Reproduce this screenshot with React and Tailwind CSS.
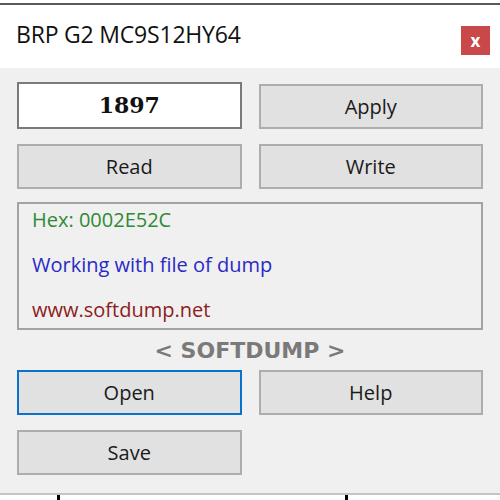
const btn =
  'h-[45px] bg-[#e1e1e1] border-2 border-[#adadad] text-[20px] text-[#1a1a1a] flex items-center justify-center';

export default function App() {
  return (
    <div
      className="w-[500px] h-[500px] flex flex-col bg-white overflow-hidden"
      style={{ fontFamily: '"Open Sans", "Noto Sans", sans-serif' }}
    >
      {/* window frame + title bar */}
      <div className="mt-[3px] border-t-2 border-[#595959] h-[65px] bg-white flex items-start justify-between pl-[16px] pr-[10px]">
        <span className="mt-[18px] text-[23px] text-[#111] leading-none tracking-[-0.2px]">
          BRP G2 MC9S12HY64
        </span>
        <button className="mt-[21px] w-[29px] h-[29px] bg-[#c94849] text-white text-[17px] font-bold flex items-center justify-center leading-none">
          x
        </button>
      </div>

      <div className="flex-1 bg-[#f0f0f0] px-[17px] flex flex-col">
        <div className="mt-[14px] grid grid-cols-2 gap-x-[17px] items-end">
          <div className="h-[47px] bg-white border-2 border-[#7a7a7a] flex items-center justify-center">
            <span
              className="text-[22px] font-bold text-[#111] -mt-[1px]"
              style={{ fontFamily: '"DejaVu Serif", serif' }}
            >
              1897
            </span>
          </div>
          <button className={btn}>Apply</button>
        </div>

        <div className="mt-[15px] grid grid-cols-2 gap-x-[17px]">
          <button className={btn}>Read</button>
          <button className={btn}>Write</button>
        </div>

        <div className="mt-[13px] h-[128px] border-2 border-[#a3a3a3] pl-[13px] flex flex-col gap-[13px] text-[20px] leading-[32px]">
          <div className="text-[#2f8a35]">Hex: 0002E52C</div>
          <div className="text-[#2a2ac4]">Working with file of dump</div>
          <div className="text-[#8e1c1c]">www.softdump.net</div>
        </div>

        <div
          className="h-[40px] flex items-center justify-center text-[22px] font-bold text-[#7a7a7a]"
          style={{ fontFamily: '"DejaVu Sans", sans-serif' }}
        >
          &lt; SOFTDUMP &gt;
        </div>

        <div className="grid grid-cols-2 gap-x-[17px]">
          <button className="h-[45px] bg-[#e1e1e1] border-2 border-[#0a72cc] text-[20px] text-[#1a1a1a] flex items-center justify-center">
            Open
          </button>
          <button className={btn}>Help</button>
        </div>

        <div className="mt-[15px] grid grid-cols-2 gap-x-[17px]">
          <button className={btn}>Save</button>
        </div>
      </div>

      {/* bottom edge of the window and what lies under it */}
      <div className="h-[7px] border-t-2 border-[#c4c4c4] bg-white flex">
        <div className="ml-[57px] w-[3px] h-[5px] bg-black" />
        <div className="ml-[285px] w-[3px] h-[5px] bg-black" />
      </div>
    </div>
  );
}
